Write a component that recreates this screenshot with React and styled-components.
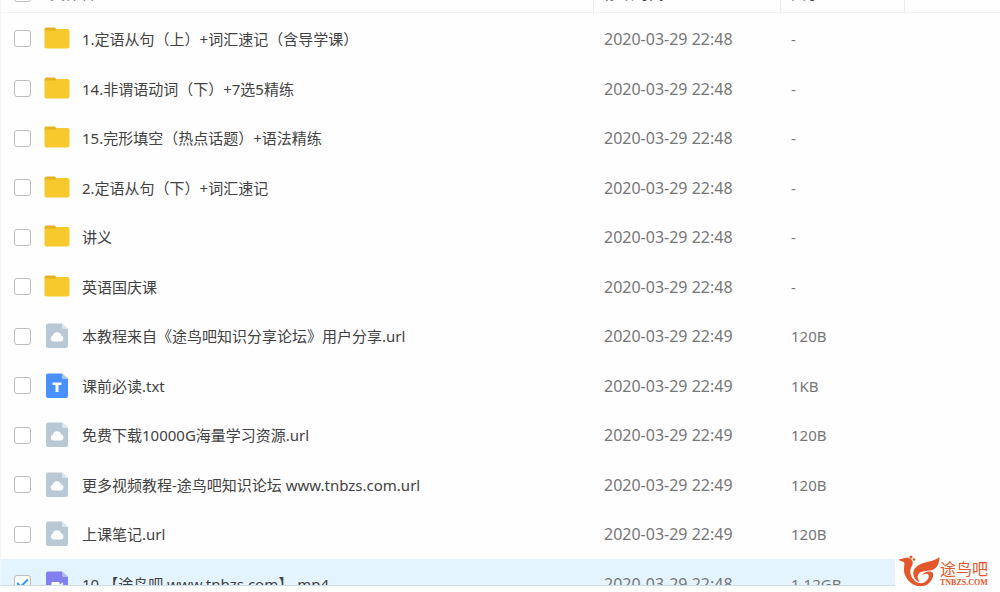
import { useState } from 'react';
import styled, { createGlobalStyle } from 'styled-components';

const initialFiles = [
  { name: '1.定语从句（上）+词汇速记（含导学课）', type: 'folder', date: '2020-03-29 22:48', size: '-' },
  { name: '14.非谓语动词（下）+7选5精练', type: 'folder', date: '2020-03-29 22:48', size: '-' },
  { name: '15.完形填空（热点话题）+语法精练', type: 'folder', date: '2020-03-29 22:48', size: '-' },
  { name: '2.定语从句（下）+词汇速记', type: 'folder', date: '2020-03-29 22:48', size: '-' },
  { name: '讲义', type: 'folder', date: '2020-03-29 22:48', size: '-' },
  { name: '英语国庆课', type: 'folder', date: '2020-03-29 22:48', size: '-' },
  { name: '本教程来自《途鸟吧知识分享论坛》用户分享.url', type: 'url', date: '2020-03-29 22:49', size: '120B' },
  { name: '课前必读.txt', type: 'txt', date: '2020-03-29 22:49', size: '1KB' },
  { name: '免费下载10000G海量学习资源.url', type: 'url', date: '2020-03-29 22:49', size: '120B' },
  { name: '更多视频教程-途鸟吧知识论坛 www.tnbzs.com.url', type: 'url', date: '2020-03-29 22:49', size: '120B' },
  { name: '上课笔记.url', type: 'url', date: '2020-03-29 22:49', size: '120B' },
  { name: '10.【途鸟吧 www.tnbzs.com】.mp4', type: 'video', date: '2020-03-29 22:48', size: '1.12GB', checked: true },
];

const sheetColors = {
  url: ['#b8c8d4', '#dce6ed'],
  txt: ['#4a90fb', '#a5c9ff'],
  video: ['#8280ee', '#b9b8fa'],
};

const FileIcon = ({ type }) => {
  if (type === 'folder') {
    return (
      <StyledIcon viewBox="0 0 26 26" aria-hidden="true">
        <path d="M0.5 3.500a2 2 0 0 1 2-2h8.500l1.500 2v2H0.500z" fill="#e3b121" />
        <path
          d="M0.500 4.500h10.500l1.500-1.500h11a2 2 0 0 1 2 2v15.500a2 2 0 0 1-2 2h-21a2 2 0 0 1-2-2z"
          fill="#f7c92d"
        />
      </StyledIcon>
    );
  }

  const [fill, fold] = sheetColors[type];
  return (
    <StyledIcon viewBox="0 0 26 26" aria-hidden="true">
      <path d="M4 0.500h14l6 5.500v17a2 2 0 0 1-2 2H4a2 2 0 0 1-2-2V2.500a2 2 0 0 1 2-2z" fill={fill} />
      <path d="M18 0.500l6 5.500h-4.500a1.500 1.500 0 0 1-1.500-1.500z" fill={fold} />
      {type === 'url' && (
        <path d="M9.500 18.500a3 3 0 0 1-.6-5.900 4.300 4.300 0 0 1 8.300-.1 3.050 3.050 0 0 1-.5 6z" fill="#fff" />
      )}
      {type === 'txt' && <path d="M8.500 9.500h9v2.600h-3V19h-3v-6.900h-3z" fill="#fff" />}
      {type === 'video' && (
        <path
          d="M8.500 11h6a1 1 0 0 1 1 1v1.500l3.500-2v8l-3.500-2V19a1 1 0 0 1-1 1h-6a1 1 0 0 1-1-1v-7a1 1 0 0 1 1-1z"
          fill="#fff"
        />
      )}
    </StyledIcon>
  );
};

const BirdLogo = () => (
  <svg viewBox="0 0 42 34" fill="#e4572a" aria-hidden="true">
    {/* crest */}
    <circle cx="13" cy="3" r="1.600" />
    <circle cx="16" cy="5.500" r="1.300" />
    {/* head, neck and belly */}
    <path d="M0.500 5.500C3 5 5 4.500 7.500 3.800C11 3.200 15 5.500 14.800 9C14.600 12 12 14 12.300 18C12.600 22 14.500 25 17.500 27.500C20 29.500 24 29.800 27 28C30 26 31.500 23 30.500 21C29.500 19.200 26 19.500 23.500 21.500C26 17.500 32 16.500 34.500 18.500C36.500 21 34 27 30 30C26 33 19 33 14.500 30C8.500 26 5.500 20 6 14.500C6.200 11 7.200 9.500 5.500 8C4 7 2 7 0.500 5.500Z" />
    {/* wing */}
    <path d="M18.500 26.500C13.500 21 14.500 15 20 11.500C27 7 36 8 41.500 3C41.500 9 39 15 33.500 16.200C28 17 22.500 17 20.500 20C19 22.500 19.500 25 21.500 28C20.500 28 19.500 27.500 18.500 26.500Z" />
  </svg>
);

const App = () => {
  const [files, setFiles] = useState(initialFiles);

  const toggleFile = (idx) => {
    setFiles((prev) => prev.map((f, i) => (i === idx ? { ...f, checked: !f.checked } : f)));
  };

  const toggleAll = (e) => {
    setFiles(files.map((f) => ({ ...f, checked: e.target.checked })));
  };

  return (
    <>
      <GlobalStyle />
      <StyledPanel>
        <StyledTable>
          <colgroup>
            <col />
            <col className="date" />
            <col className="size" />
            <col className="rest" />
          </colgroup>
          <thead>
            <tr>
              <StyledHead>
                <StyledNameCell $head>
                  <StyledCheckbox
                    aria-label="全选"
                    checked={files.every((f) => f.checked)}
                    onChange={toggleAll}
                  />
                  文件名
                </StyledNameCell>
              </StyledHead>
              <StyledHead>修改时间</StyledHead>
              <StyledHead>大小</StyledHead>
              <StyledHead />
            </tr>
          </thead>
          <tbody>
            {files.map((file, idx) => (
              <StyledRow key={file.name} $selected={file.checked}>
                <td>
                  <StyledNameCell>
                    <StyledCheckbox
                      id={`file-${idx}`}
                      checked={!!file.checked}
                      onChange={() => toggleFile(idx)}
                    />
                    <FileIcon type={file.type} />
                    <label htmlFor={`file-${idx}`}>{file.name}</label>
                  </StyledNameCell>
                </td>
                <StyledDate>{file.date}</StyledDate>
                <StyledSize>{file.size}</StyledSize>
                <td />
              </StyledRow>
            ))}
          </tbody>
        </StyledTable>
      </StyledPanel>

      <StyledBrand>
        <BirdLogo />
        <div>
          <p className="title">途鸟吧</p>
          <p className="site">TNBZS.COM</p>
        </div>
      </StyledBrand>
    </>
  );
};

const GlobalStyle = createGlobalStyle`
  body {
    margin: 0;
    background: #fefefe;
    color: #424242;
    font-family: 'Noto Sans', 'Noto Sans CJK SC', sans-serif;
    font-size: 15px;
    line-height: 20px;
  }
`;

const StyledPanel = styled.main`
  box-sizing: border-box;
  height: calc(100vh - 6px);
  overflow: hidden;
  border-left: 1px solid #f2f5f8;
  border-bottom: 1px solid #cfdde6;
`;

const StyledTable = styled.table`
  width: 100%;
  margin-top: -26px;
  table-layout: fixed;
  border-collapse: separate;
  border-spacing: 0;

  .date {
    width: 187px;
  }
  .size {
    width: 124px;
  }
  .rest {
    width: 96px;
  }

  td {
    padding: 0 0 0 11px;
  }
`;

const StyledHead = styled.th`
  box-sizing: border-box;
  height: 39px;
  padding: 0 0 0 10px;
  border-left: 1px solid #ececec;
  border-bottom: 1px solid #f2f2f2;
  font-weight: normal;
  text-align: left;

  &:first-child {
    padding-left: 11px;
    border-left: none;
  }
`;

const StyledRow = styled.tr`
  height: 49px;
  background: ${({ $selected }) => ($selected ? '#e4f4fe' : 'transparent')};

  &:nth-child(odd) {
    height: 50px;
  }

  &:first-child {
    height: 51px;
  }
`;

const StyledNameCell = styled.div`
  display: flex;
  align-items: center;
  gap: ${({ $head }) => ($head ? '18px' : '12px')};
  padding-left: 2px;
  white-space: nowrap;
`;

const StyledCheckbox = styled.input.attrs({ type: 'checkbox' })`
  display: grid;
  flex: none;
  place-content: center;
  appearance: none;
  box-sizing: border-box;
  width: 17px;
  height: 17px;
  margin: 0 1px 0 0;
  border: 1px solid #bcbcbc;
  border-radius: 3px;
  background: #fff;

  &:checked::before {
    content: '';
    width: 11px;
    height: 6px;
    margin-bottom: 4px;
    border-left: 2px solid #2d9df0;
    border-bottom: 2px solid #2d9df0;
    box-sizing: border-box;
    transform: rotate(-45deg);
  }
`;

const StyledIcon = styled.svg`
  flex: none;
  width: 26px;
  height: 26px;
`;

const StyledDate = styled.td`
  color: #777;
  font-size: 16px;
`;

const StyledSize = styled.td`
  color: #777;
`;

const StyledBrand = styled.aside`
  position: fixed;
  right: 0;
  bottom: 0;
  display: flex;
  align-items: flex-end;
  box-sizing: border-box;
  width: 105px;
  height: 40px;
  padding: 0 0 4px 3px;
  background: #fefefe;
  color: #e4572a;

  svg {
    flex: none;
    width: 42px;
    height: 34px;
  }

  p {
    margin: 0;
    white-space: nowrap;
  }
  .title {
    font-size: 16px;
    line-height: 18px;
  }
  .site {
    font: bold 8px/10px 'Liberation Serif', serif;
  }
`;

export default App;
